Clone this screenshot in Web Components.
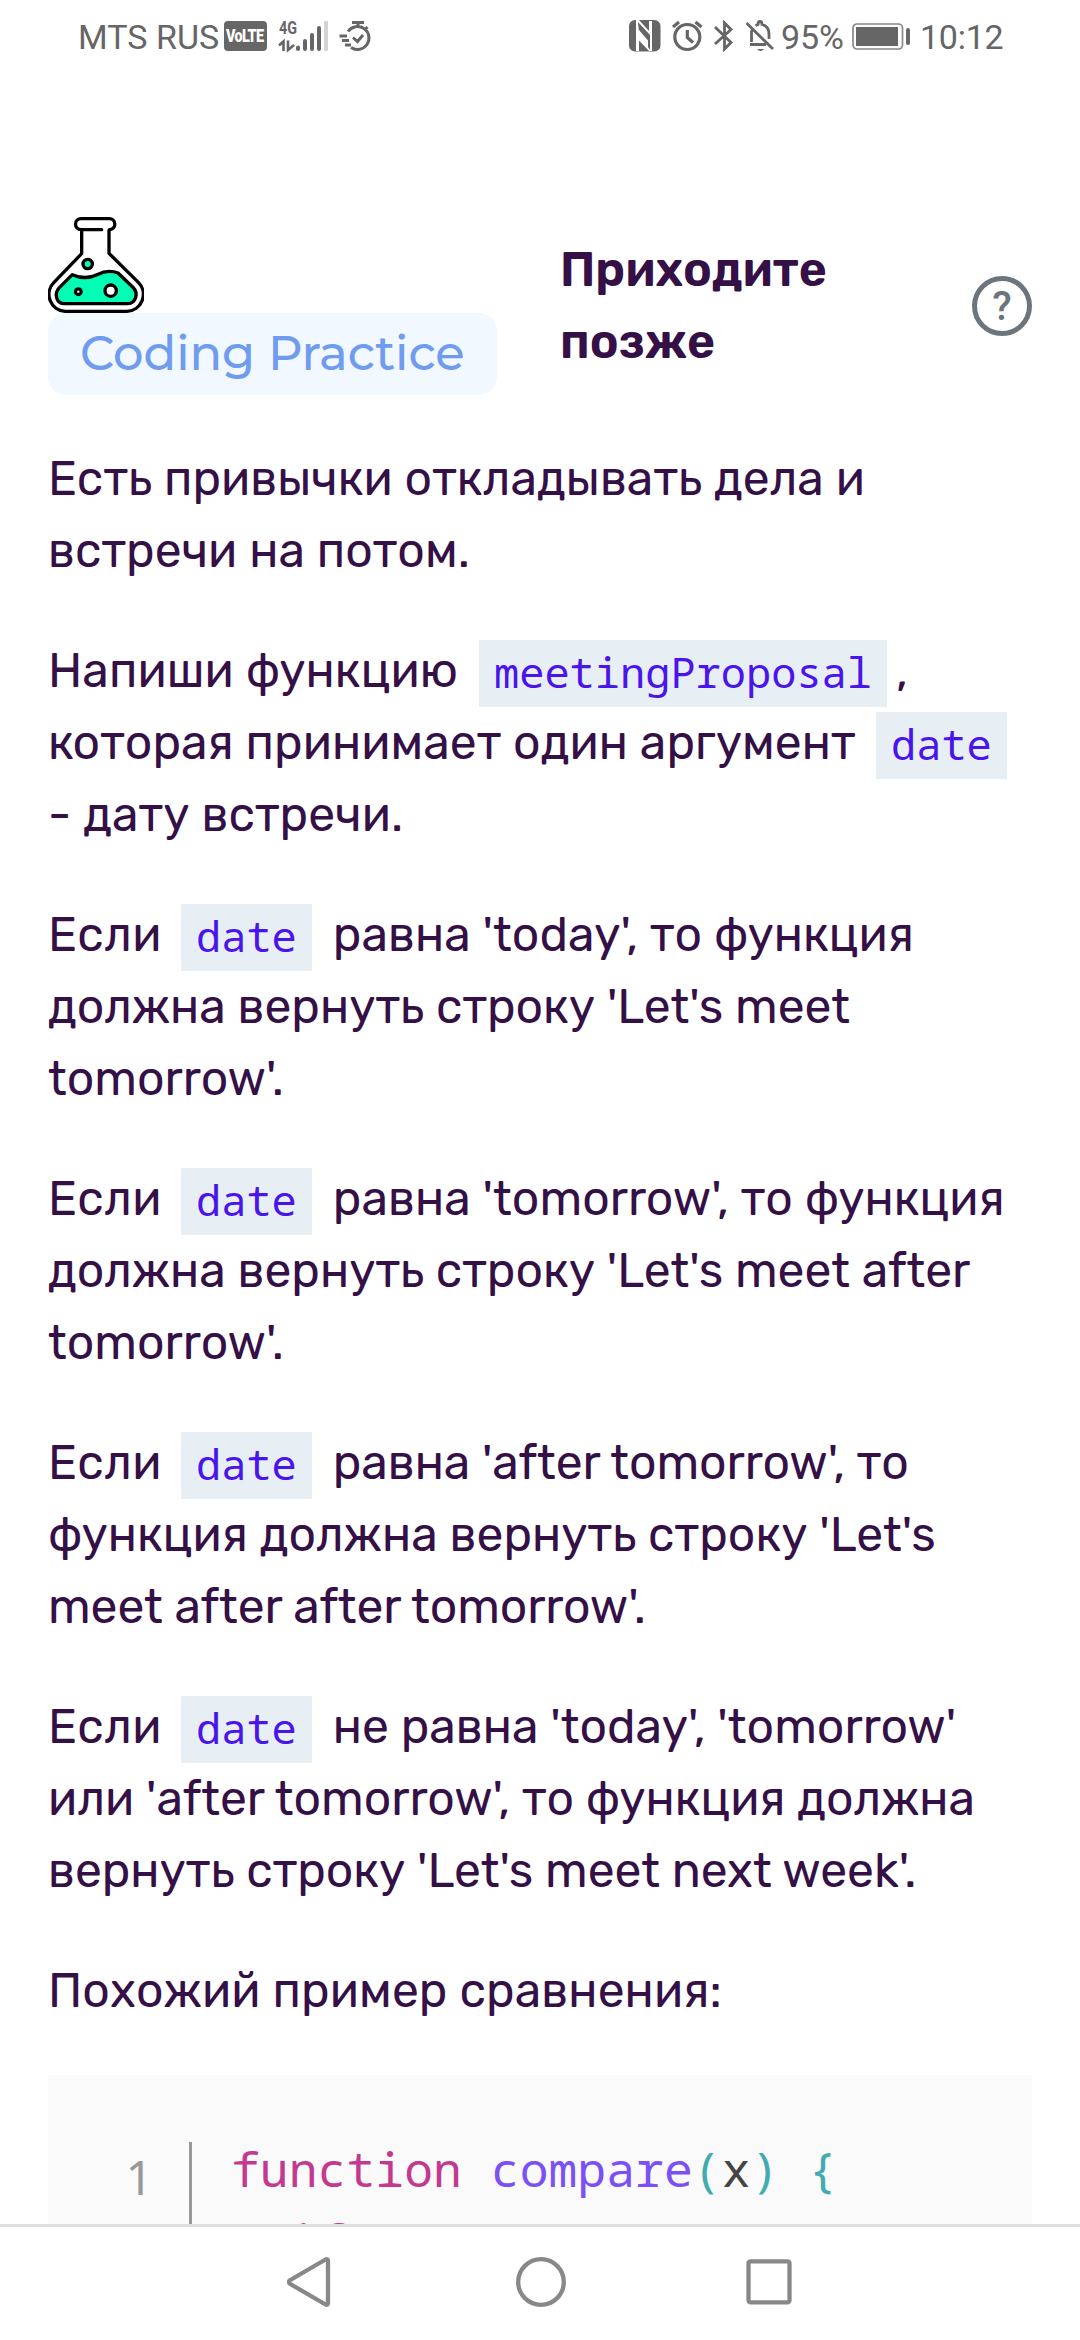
<!DOCTYPE html>
<html lang="ru">
<head>
<meta charset="utf-8">
<title>Приходите позже</title>
<style>
html,body{margin:0;background:#fff}
body{width:1080px;height:2340px;overflow:hidden;font-family:Rubik,Roboto,sans-serif;color:#341047}
</style>
</head>
<body>
<practice-screen></practice-screen>
<script>
const define = (name, html, setup) => {
  const t = document.createElement('template');
  t.innerHTML = html;
  customElements.define(name, class extends HTMLElement {
    constructor(){ super(); this.attachShadow({mode:'open'}).append(t.content.cloneNode(true)); }
    connectedCallback(){ if(setup) setup(this); }
  });
};

/* Text run whose tracking is set so that its ink ends at the "ink" offset. */
const ctx = document.createElement('canvas').getContext('2d');
const track = el => {
  const cs = getComputedStyle(el), s = el.textContent;
  ctx.font = `${cs.fontWeight} ${cs.fontSize} ${cs.fontFamily}`;
  const m = ctx.measureText(s);
  if (el.hasAttribute('w')) el.style.width = el.getAttribute('w') + 'px';
  el.style.letterSpacing = ((+el.getAttribute('ink') - m.actualBoundingBoxRight) / (s.length - 1)).toFixed(3) + 'px';
};
define('text-run', `<style>:host{display:block;flex:none;white-space:pre}</style><slot></slot>`, track);

define('text-line', `<style>:host{display:flex;height:72px;line-height:72px;white-space:nowrap}</style><slot></slot>`);

define('text-block', `<style>:host{display:block;margin-bottom:48px;font-size:48px}</style><slot></slot>`);

define('code-chip', `<style>
:host{display:block;flex:none;box-sizing:border-box;height:67px;margin-top:5px;padding:0 15px;background:#e7eff5;
color:#4a15ea;font:42px/63px "Noto Sans Mono","Droid Sans Mono","DejaVu Sans Mono",monospace;white-space:pre}
</style><slot></slot>`);

define('flask-icon', `<style>:host{display:block;width:96px;height:96px}svg{display:block}</style>
<svg width="96" height="96" viewBox="0 0 288 288" fill="none" stroke="#000" stroke-width="10" stroke-linecap="round" stroke-linejoin="round">
<path d="M161 38H99a16.5 16.5 0 0 1 0-33H184a16.5 16.5 0 0 1 0 33"/>
<path d="M101 40V110L18 196A51 51 0 0 0 51 283H237A51 51 0 0 0 271 196L183 109V40"/>
<path d="M73 173C95 183 122 185 147 173C167 163 190 160 210 168L254 210C274 230 262 260 240 260H50C26 260 16 232 34 212Z" fill="#00ffb4"/>
<circle cx="119" cy="141" r="14" fill="#00ffb4"/>
<circle cx="91" cy="224" r="8.5" fill="#fff"/>
<circle cx="188" cy="221" r="17" fill="#fff"/>
</svg>`);

define('practice-badge', `<style>
:host{display:block;box-sizing:border-box;width:449px;height:82px;border-radius:18px;background:#f2f8ff;color:#6f9cee;padding-left:32px;
font:500 48px/80px Montserrat,Inter,sans-serif}
</style><text-run ink="383.3">Coding Practice</text-run>`);

define('help-button', `<style>
:host{display:flex;box-sizing:border-box;width:60px;height:60px;border:5.5px solid #6c757d;border-radius:50%;justify-content:center;
color:#6c757d;font:500 40px/52px Roboto,sans-serif}
</style><span>?</span>`);

define('practice-header', `<style>
:host{display:flex;height:178px;align-items:center;margin-bottom:48px}
.kind{width:512px}
h1{margin:0;width:412px;font-size:48px;font-weight:600}
</style>
<div class="kind"><flask-icon></flask-icon><practice-badge></practice-badge></div>
<h1><text-line><text-run ink="265.7">Приходите</text-run></text-line><text-line><text-run ink="154">позже</text-run></text-line></h1>
<help-button></help-button>`);

define('code-block', `<style>
:host{display:flex;box-sizing:border-box;height:400px;background:#fafafa;padding-top:67px;
font:48px/72px "Noto Sans Mono","Droid Sans Mono","DejaVu Sans Mono",monospace;letter-spacing:.06px;color:#444}
.num{box-sizing:border-box;width:144px;border-right:3px solid #999;color:#999;padding:2px 36px 0 0;text-align:right;font-family:"Noto Sans",sans-serif;line-height:66px}
pre{margin:-9px 0 0 39px;font:inherit}
.k{color:#c23a90}.f{color:#7b50f5}.p{color:#40abb2}
</style><div class="num">1</div>
<pre><span class="k">function</span> <span class="f">compare</span><span class="p">(</span>x<span class="p">)</span> <span class="p">{</span>
  <span class="k">if</span></pre>`);

define('status-bar', `<style>
:host{display:flex;justify-content:space-between;box-sizing:border-box;height:75px;padding:0 76px 0 78px;color:#666;font:34px/74px Roboto,sans-serif}
div{display:flex}
svg{display:block;flex:none;margin-top:18px;overflow:visible}
.volte{box-sizing:border-box;width:43px;height:30px;margin:21px 0 0 4px;padding-left:2px;border-radius:4px;background:#666;color:#fff;font:900 19px/29px Roboto,sans-serif}
.volte text-run{transform:scaleX(.76);transform-origin:0 0}
.net{margin-left:12px;width:18px;height:33px;margin-top:18px;font:700 18px/20px Roboto,sans-serif;display:block}
.net span{display:block;transform:scaleX(.8);transform-origin:0 0;height:19px}
.net svg{margin:0}
</style>
<div>
<text-run w="142" ink="140">MTS RUS</text-run>
<div class="volte"><text-run ink="50.5">VoLTE</text-run></div>
<div class="net"><span>4G</span><svg width="16" height="14" viewBox="0 0 16 14" fill="none" stroke="#666" stroke-width="2.6"><path d="M4.5 14V4.5L0 8.5M9 3.5V13L15 8"/></svg></div>
<svg width="32" height="34" viewBox="0 0 32 34" fill="#666" style="margin-left:-1px"><rect y="27.500" width="4" height="5.500" rx="2"/><rect x="7" y="21" width="4" height="12" rx="2"/><rect x="14" y="15" width="4" height="18" rx="2"/><rect x="21" y="8" width="4" height="25" rx="2"/><rect x="28" y="3" width="4" height="30" rx="1" fill="#d3d3d3"/></svg>
<svg width="33" height="34" viewBox="0 0 33 34" fill="none" stroke="#666" stroke-width="3" style="margin-left:10px"><path d="M14 4.500H26M20 5V9M10 13.500A11.500 11.500 0 1 1 13 29.500M1.500 18H9M4 22.500H11M7 27H13M15 19.500L19.500 23.500L25 17M27.500 9L29.500 11"/></svg>
</div>
<div>
<svg width="32" height="34" viewBox="0 0 32 34"><rect y="2" width="31.500" height="31.500" rx="6" fill="#666"/><path d="M7 2H10L20 13V3H23V33H20L10 22.500V33H7Z" fill="#fff"/><path d="M9 4L21 17V32L19 29V23L10 14Z" fill="#666"/><path d="M10 12L19 22.500V26L10 16Z" fill="#fff"/></svg>
<svg width="31" height="34" viewBox="0 0 31 34" fill="none" stroke="#666" stroke-width="3.200" style="margin-left:11px"><circle cx="15.300" cy="19" r="12.500"/><path d="M15.300 12V19.500L21 24.500M1 9L7 4M23.500 4L29.500 9"/></svg>
<svg width="20" height="34" viewBox="0 0 20 34" fill="none" stroke="#666" stroke-width="2.800" style="margin-left:11px"><path d="M1 9L17 24.500L10.500 31V5L17 11.500L1 26"/></svg>
<svg width="28" height="34" viewBox="0 0 28 34" fill="none" stroke="#666" stroke-width="2.800" style="margin-left:12px"><path d="M.5 5L27 31M4 26.500H20M5.500 24V13.500L7 11M9.500 7.500L12 6.500Q12 3.500 14 3.500T16 6.500Q23 8 23 16V21"/><path d="M11 31H18Q14.500 35 11 31Z" fill="#666" stroke="none"/></svg>
<text-run w="71" ink="62" style="margin-left:7px">95%</text-run>
<svg width="58" height="34" viewBox="0 0 58 34"><rect x="1" y="6" width="49.500" height="25" rx="4" fill="none" stroke="#888" stroke-width="1.700"/><rect x="4" y="9" width="42" height="19" fill="#666"/><rect x="54" y="10" width="4" height="17" rx="2" fill="#666"/></svg>
<text-run w="84" ink="82.500" style="margin-left:10px">10:12</text-run>
</div>`);

define('nav-bar', `<style>
:host{display:flex;box-sizing:border-box;height:116px;border-top:3px solid #e0e0e0;background:#fff;align-items:center;padding:0 286px}
div{display:flex;width:100%;justify-content:space-between;align-items:center;padding-bottom:3px}svg{display:block}
</style><div>
<svg width="50" height="50" viewBox="0 0 50 50" fill="none" stroke="#888" stroke-width="4.300" stroke-linejoin="round"><path d="M3.500 23.500Q2.500 25 3.500 26.500L39.500 47.500Q42 48.500 42 46V4Q42 1.500 39.500 2.500Z"/></svg>
<svg width="50" height="50" viewBox="0 0 50 50" fill="none" stroke="#888" stroke-width="4.300" style="margin-left:1px"><circle cx="25" cy="25" r="22.800"/></svg>
<svg width="50" height="50" viewBox="0 0 50 50" fill="none" stroke="#888" stroke-width="4.300"><rect x="4.500" y="4.300" width="41" height="41" rx="2"/></svg>
</div>`);

define('practice-screen', `<style>
:host{display:flex;flex-direction:column;width:1080px;height:2340px;overflow:hidden}
main{flex:1;min-height:0;overflow:hidden;padding:142px 48px 0}
.after{margin-left:21px}
</style>
<status-bar></status-bar>
<main>
<practice-header></practice-header>
<text-block><text-line><text-run ink="813.700">Есть привычки откладывать дела и</text-run></text-line><text-line><text-run ink="418.700">встречи на потом.</text-run></text-line></text-block>
<text-block><text-line><text-run w="431" ink="407.700">Напиши функцию</text-run><code-chip>meetingProposal</code-chip><span style="margin-left:9px">,</span></text-line>
<text-line><text-run w="828" ink="807">которая принимает один аргумент</text-run><code-chip>date</code-chip></text-line>
<text-line><text-run ink="352">- дату встречи.</text-run></text-line></text-block>
<text-block><text-line><text-run w="133" ink="110.300">Если</text-run><code-chip>date</code-chip><text-run class="after" ink="578">равна 'today', то функция</text-run></text-line>
<text-line><text-run ink="801.300">должна вернуть строку 'Let's meet</text-run></text-line><text-line><text-run ink="232.700">tomorrow'.</text-run></text-line></text-block>
<text-block><text-line><text-run w="133" ink="110.300">Если</text-run><code-chip>date</code-chip><text-run class="after" ink="668.700">равна 'tomorrow', то функция</text-run></text-line>
<text-line><text-run ink="922">должна вернуть строку 'Let's meet after</text-run></text-line><text-line><text-run ink="232.700">tomorrow'.</text-run></text-line></text-block>
<text-block><text-line><text-run w="133" ink="110.300">Если</text-run><code-chip>date</code-chip><text-run class="after" ink="575.300">равна 'after tomorrow', то</text-run></text-line>
<text-line><text-run ink="886.300">функция должна вернуть строку 'Let's</text-run></text-line><text-line><text-run ink="598">meet after after tomorrow'.</text-run></text-line></text-block>
<text-block><text-line><text-run w="133" ink="110.300">Если</text-run><code-chip>date</code-chip><text-run class="after" ink="621">не равна 'today', 'tomorrow'</text-run></text-line>
<text-line><text-run ink="925.300">или 'after tomorrow', то функция должна</text-run></text-line><text-line><text-run ink="866.300">вернуть строку 'Let's meet next week'.</text-run></text-line></text-block>
<text-block><text-line><text-run ink="670.500">Похожий пример сравнения:</text-run></text-line></text-block>
<code-block></code-block>
</main>
<nav-bar></nav-bar>`);
</script>
</body>
</html>
